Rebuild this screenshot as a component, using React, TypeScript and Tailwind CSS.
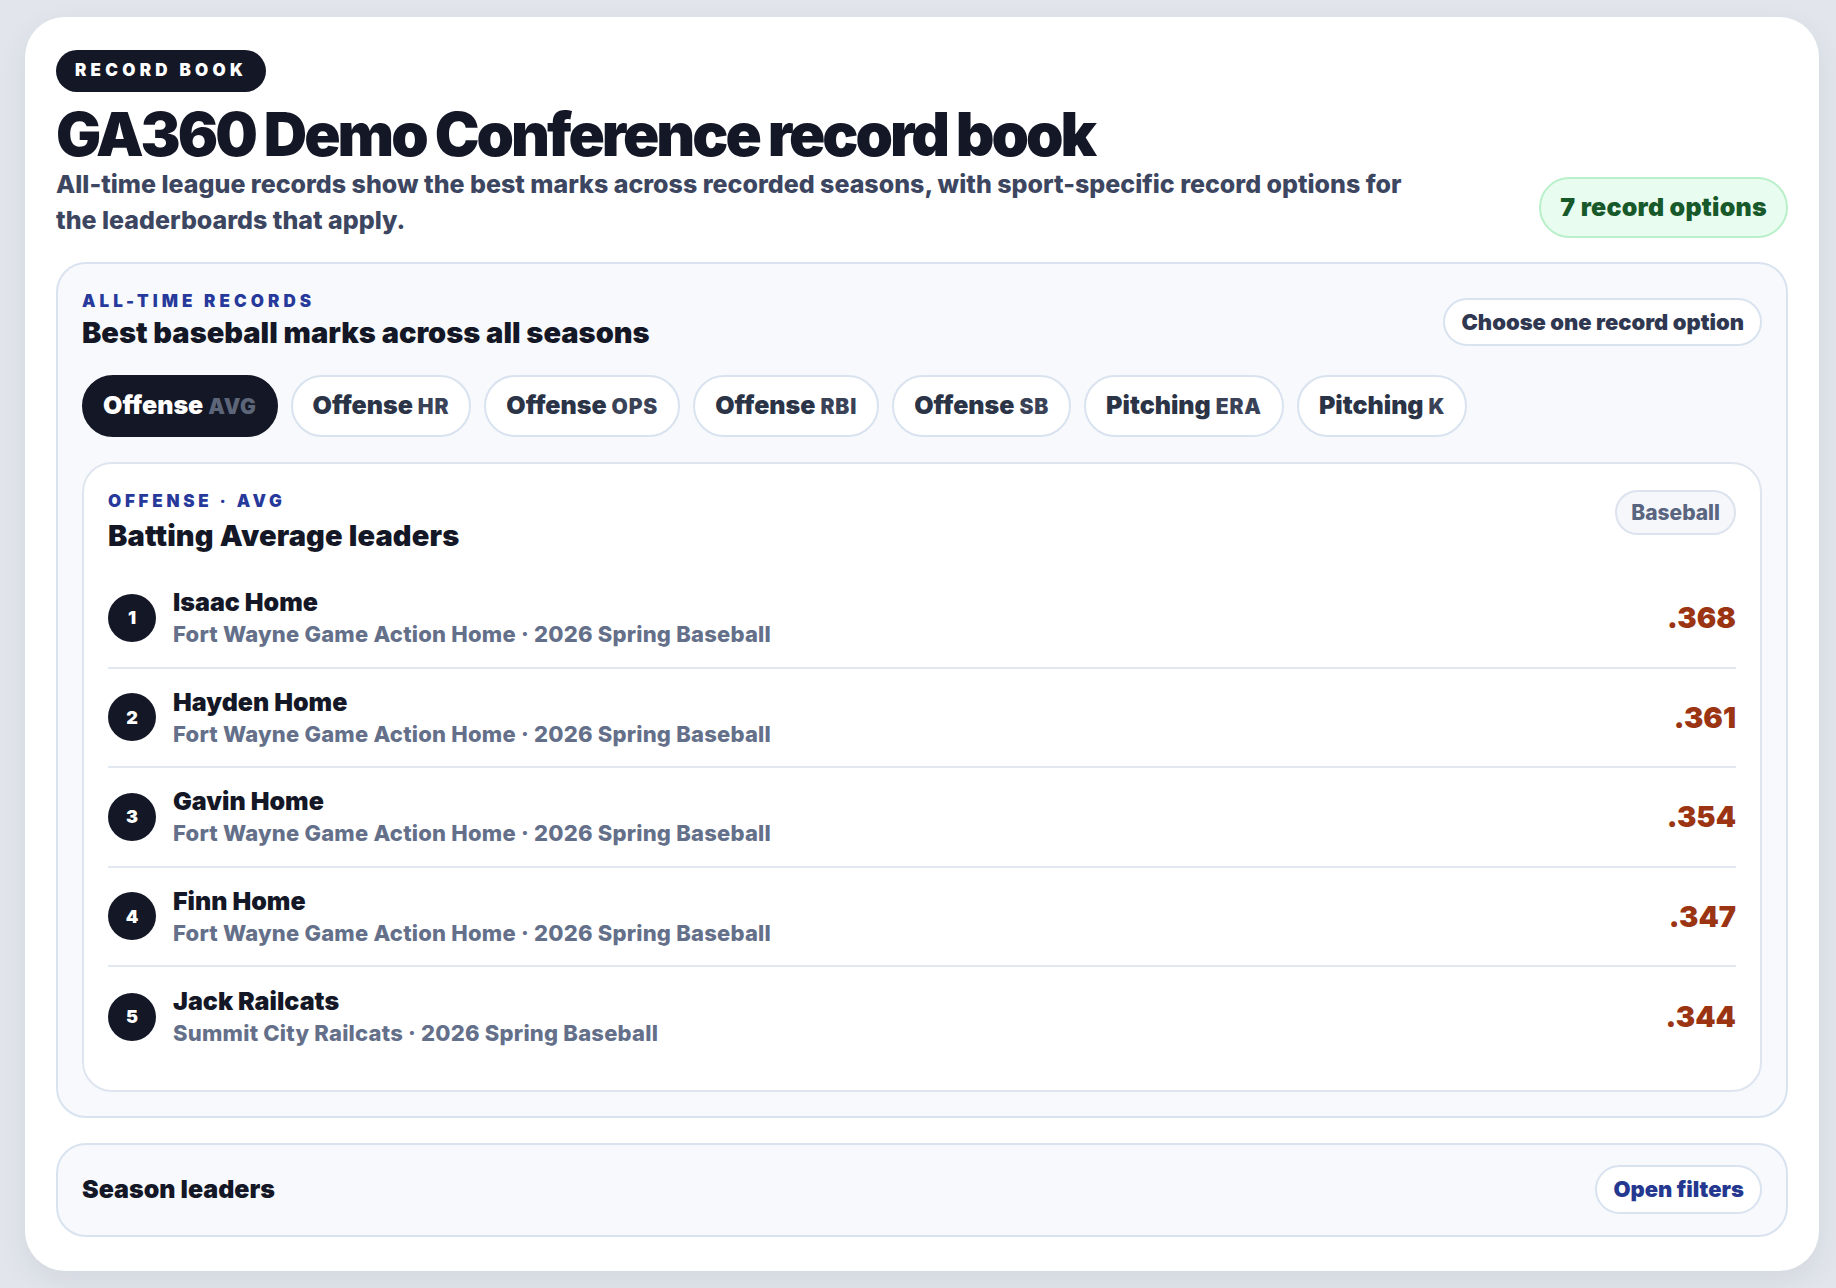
import React, { useState } from 'react';

const tabs = [
  { group: 'Offense', code: 'AVG' },
  { group: 'Offense', code: 'HR' },
  { group: 'Offense', code: 'OPS' },
  { group: 'Offense', code: 'RBI' },
  { group: 'Offense', code: 'SB' },
  { group: 'Pitching', code: 'ERA' },
  { group: 'Pitching', code: 'K' },
];

const leaders = [
  { name: 'Isaac Home', team: 'Fort Wayne Game Action Home', season: '2026 Spring Baseball', value: '.368' },
  { name: 'Hayden Home', team: 'Fort Wayne Game Action Home', season: '2026 Spring Baseball', value: '.361' },
  { name: 'Gavin Home', team: 'Fort Wayne Game Action Home', season: '2026 Spring Baseball', value: '.354' },
  { name: 'Finn Home', team: 'Fort Wayne Game Action Home', season: '2026 Spring Baseball', value: '.347' },
  { name: 'Jack Railcats', team: 'Summit City Railcats', season: '2026 Spring Baseball', value: '.344' },
];

export default function App() {
  const [active, setActive] = useState(0);

  return (
    <div
      className="min-h-screen bg-[#e2e6ec] pl-[25px] pr-[17px] pt-[17px] pb-[20px]"
      style={{ fontFamily: 'Inter, "Noto Sans", sans-serif' }}
    >
      <div className="rounded-[40px] bg-white px-[31px] pt-[33px] pb-[34px] shadow-[0_10px_30px_rgba(30,41,59,0.08)]">
        {/* Header */}
        <span className="inline-flex h-[42px] items-center rounded-full bg-[#141726] px-[19px] text-[17px] font-black uppercase tracking-[0.25em] text-white">
          Record book
        </span>
        <h1 className="mt-[11px] text-[60px] font-black leading-[1.05] tracking-[-0.05em] text-[#141726]">
          GA360 Demo Conference record book
        </h1>
        <div className="flex items-end justify-between gap-8">
          <p className="max-w-[1390px] text-[25px] font-extrabold leading-[36px] text-[#3d4660]">
            All-time league records show the best marks across recorded seasons, with sport-specific record options for
            the leaderboards that apply.
          </p>
          <span className="inline-flex h-[61px] shrink-0 items-center rounded-full border-2 border-[#b8f0c9] bg-[#e9fcf0] px-[19px] text-[25px] font-black tracking-[0.01em] text-[#17592a]">
            7 record options
          </span>
        </div>

        {/* All-time records */}
        <section className="mt-[24px] rounded-[30px] border-2 border-[#d9e3f0] bg-[#f7f9fc] px-[24px] pt-[26px] pb-[24px]">
          <div className="flex items-start justify-between">
            <div>
              <p className="text-[17px] font-black uppercase leading-[22px] tracking-[0.24em] text-[#27399a]">All-time records</p>
              <h2 className="mt-[4px] text-[29px] font-black leading-[34px] text-[#141726]">
                Best baseball marks across all seasons
              </h2>
            </div>
            <button className="mt-[8px] h-[48px] rounded-full border-2 border-[#d9e3f0] bg-white px-[16px] text-[22px] font-black text-[#2f3850]">
              Choose one record option
            </button>
          </div>

          <div className="mt-[25px] flex flex-wrap gap-[13px]">
            {tabs.map((t, i) => (
              <button
                key={t.group + t.code}
                onClick={() => setActive(i)}
                className={
                  i === active
                    ? 'h-[62px] rounded-full border-2 border-[#141726] bg-[#141726] px-[19px] text-[25px] font-black text-white'
                    : 'h-[62px] rounded-full border-2 border-[#d9e3f0] bg-white px-[20px] text-[25px] font-black text-[#2b3347]'
                }
              >
                {t.group}{' '}
                <span
                  className={
                    i === active
                      ? 'text-[21px] font-black tracking-[0.03em] text-[#5d6579]'
                      : 'text-[21px] font-black tracking-[0.04em] text-[#3a4257]'
                  }
                >
                  {t.code}
                </span>
              </button>
            ))}
          </div>

          {/* Leaders card */}
          <div className="mt-[25px] rounded-[30px] border-2 border-[#dfe5ef] bg-white px-[24px] pt-[26px] pb-[23px]">
            <div className="flex items-start justify-between">
              <div>
                <p className="text-[17px] font-black uppercase leading-[22px] tracking-[0.22em] text-[#27399a]">Offense · AVG</p>
                <h3 className="mt-[7px] text-[29px] font-black leading-[34px] tracking-[0.005em] text-[#141726]">
                  Batting Average leaders
                </h3>
              </div>
              <span className="inline-flex h-[45px] items-center rounded-full border-2 border-[#dde3ee] bg-[#f5f7fb] px-[14px] text-[21px] font-extrabold text-[#5a6580]">
                Baseball
              </span>
            </div>

            <ol className="mt-[16px]">
              {leaders.map((l, i) => (
                <li
                  key={l.name}
                  className={
                    i < leaders.length - 1
                      ? 'flex h-[99.5px] items-center gap-[17px] border-b-2 border-[#e2e8f0]'
                      : 'flex h-[99.5px] items-center gap-[17px]'
                  }
                >
                  <span className="flex h-[48px] w-[48px] shrink-0 items-center justify-center rounded-full bg-[#141726] text-[18px] font-black text-white">
                    {i + 1}
                  </span>
                  <div className="min-w-0 flex-1">
                    <p className="text-[25px] font-black leading-[30px] text-[#141726]">{l.name}</p>
                    <p className="mt-[3px] text-[22px] font-extrabold leading-[28px] tracking-[0.01em] text-[#64708a]">
                      {l.team} · {l.season}
                    </p>
                  </div>
                  <span className="text-[29px] font-black text-[#9a3412]">{l.value}</span>
                </li>
              ))}
            </ol>
          </div>
        </section>

        {/* Season leaders */}
        <section className="mt-[25px] flex h-[94px] items-center justify-between rounded-[30px] border-2 border-[#d9e3f0] bg-[#f7f9fc] px-[24px]">
          <h2 className="text-[25px] font-black text-[#141726]">Season leaders</h2>
          <button className="h-[49px] rounded-full border-2 border-[#d9e3f0] bg-white px-[16px] text-[22px] font-black text-[#25388f]">
            Open filters
          </button>
        </section>
      </div>
    </div>
  );
}
